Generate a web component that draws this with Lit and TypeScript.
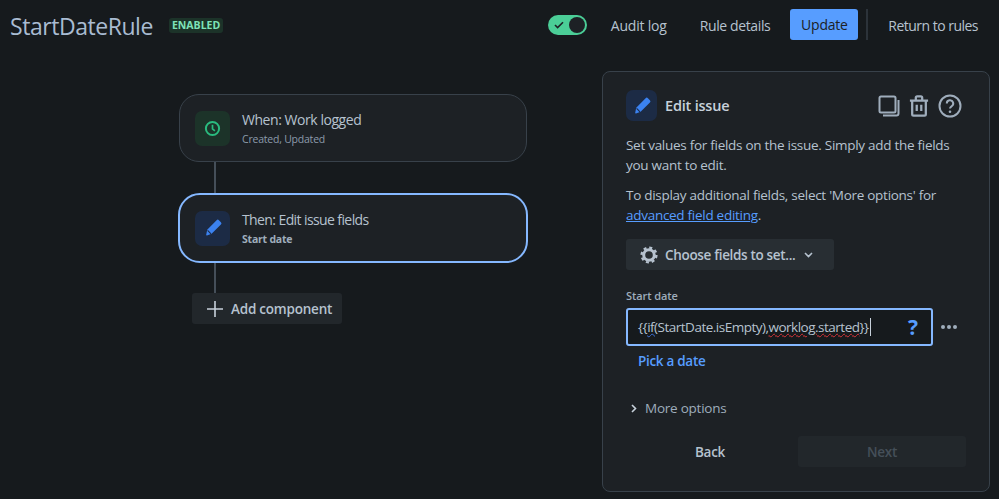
import { LitElement, html, css, svg } from "lit";
import { customElement } from "lit/decorators.js";

const pencil = svg`<path d="M13.6 2.2a1.6 1.6 0 0 1 2.3 0l2 2a1.6 1.6 0 0 1 0 2.3L8.6 15.8 4 17.4a.6.6 0 0 1-.8-.7l1-4.9z" fill="#3b82f0"/><path d="M4.6 12.4l3.4 3.4" stroke="#1c2b45" stroke-width="1.1"/>`;

@customElement("app-root")
export class AppRoot extends LitElement {
  static styles = css`
    :host {
      display: block;
      width: 999px;
      height: 499px;
      overflow: hidden;
      background: #161a1d;
      color: #b6c2cf;
      font-family: "Open Sans", "Noto Sans", sans-serif;
      font-size: 14px;
    }
    .header {
      display: flex;
      align-items: center;
      height: 49px;
      padding: 0 21px 0 10px;
    }
    .title {
      font-size: 23px;
      font-weight: 500;
      letter-spacing: -0.45px;
      color: #a9bcd2;
      margin-top: 2px;
    }
    .lozenge {
      margin-left: 16px;
      margin-top: 1px;
      padding: 0 3px;
      height: 15px;
      line-height: 15px;
      border-radius: 3px;
      background: #1c3329;
      color: #7ee2b8;
      font-size: 10.5px;
      font-weight: 700;
      letter-spacing: 0;
    }
    .spacer { flex: 1; }
    .toggle {
      position: relative;
      display: flex;
      align-items: center;
      justify-content: space-between;
      width: 39px;
      height: 20px;
      box-sizing: border-box;
      padding: 0 2px 0 6px;
      margin-top: 1px;
      border-radius: 10px;
      background: #4bce97;
      margin-right: 24px;
    }
    .knob {
      width: 16px;
      height: 16px;
      border-radius: 50%;
      background: #1d2125;
    }
    .hlink {
      font-size: 14px;
      font-weight: 500;
      color: #b6c2cf;
      letter-spacing: -0.3px;
      margin-top: 1px;
    }
    .audit { margin-right: 33px; letter-spacing: -0.2px; }
    .details { margin-right: 20px; letter-spacing: -0.38px; }
    .return { letter-spacing: -0.52px; }
    .update {
      width: 68px;
      height: 31px;
      display: flex;
      align-items: center;
      justify-content: center;
      border-radius: 3px;
      background: #579dff;
      color: #1d2125;
      font-weight: 500;
      letter-spacing: -0.25px;
    }
    .divider {
      width: 2px;
      height: 31px;
      background: #2c333a;
      margin: 0 20px 0 8px;
    }
    .main {
      display: flex;
      padding-top: 22px;
    }
    .flow {
      width: 424px;
      padding-left: 178px;
      padding-top: 23px;
      box-sizing: content-box;
    }
    .card {
      box-sizing: border-box;
      display: flex;
      align-items: center;
      gap: 12px;
      width: 348px;
      height: 68px;
      margin-left: 1px;
      padding-left: 15px;
      border: 1px solid #38414a;
      border-radius: 20px;
      background: #1d2125;
    }
    .card.sel {
      width: 350px;
      height: 70px;
      margin-left: 0;
      padding-left: 15px;
      border: 2px solid #85b8ff;
      border-radius: 22px;
    }
    .ico {
      flex: none;
      width: 35px;
      height: 35px;
      border-radius: 7px;
      display: flex;
      align-items: center;
      justify-content: center;
    }
    .ico.green { background: #1c3329; }
    .ico.blue { background: #1c2b45; }
    .ctext { padding-top: 1px; }
    .ctitle {
      font-size: 14px;
      line-height: 19px;
      color: #b6c2cf;
      letter-spacing: -0.45px;
    }
    .ctitle.tight { letter-spacing: -0.6px; }
    .csub {
      margin-top: 3px;
      font-size: 10.5px;
      line-height: 15px;
      color: #8c9bab;
      letter-spacing: -0.22px;
    }
    .csub.b { font-weight: 700; color: #9fadbc; }
    .line {
      width: 2px;
      margin-left: 36px;
      background: #454f59;
    }
    .l1 { height: 31px; }
    .l2 { height: 30px; }
    .add {
      display: inline-flex;
      align-items: center;
      gap: 7px;
      margin-left: 14px;
      width: 150px;
      height: 31px;
      box-sizing: border-box;
      padding-left: 14px;
      border-radius: 3px;
      background: #22272b;
      color: #b6c2cf;
      font-weight: 600;
      font-size: 13.5px;
      letter-spacing: -0.22px;
    }
    .panel {
      box-sizing: border-box;
      width: 388px;
      height: 421px;
      padding: 18px 23px 0;
      border: 1px solid #38414a;
      border-radius: 8px;
      background: #1d2125;
      position: relative;
    }
    .phead {
      display: flex;
      align-items: center;
      height: 31px;
    }
    .ico.small { width: 31px; height: 31px; }
    .ptitle {
      margin-left: 8px;
      font-size: 14.5px;
      font-weight: 600;
      color: #c7d1db;
      letter-spacing: -0.2px;
    }
    .actions {
      margin-left: auto;
      margin-right: 4px;
      display: flex;
      align-items: center;
      gap: 9px;
    }
    p {
      margin: 0;
      font-size: 13.5px;
      line-height: 19.5px;
      letter-spacing: -0.28px;
      color: #b6c2cf;
    }
    .p1 { margin-top: 15px; }
    .p2 { margin-top: 11px; }
    a { color: #579dff; text-decoration: underline; }
    .choose {
      display: flex;
      align-items: center;
      width: 208px;
      height: 31px;
      margin-top: 14px;
      box-sizing: border-box;
      padding-left: 14px;
      border-radius: 3px;
      background: #282e33;
      color: #b6c2cf;
      font-weight: 600;
      font-size: 13.5px;
      letter-spacing: -0.33px;
    }
    .choose .t { margin-left: 7px; margin-right: 9px; }
    .flabel {
      margin-top: 18px;
      font-size: 11px;
      line-height: 16px;
      font-weight: 600;
      color: #9fadbc;
      letter-spacing: -0.1px;
    }
    .frow {
      display: flex;
      align-items: center;
      margin-top: 4px;
    }
    .input {
      box-sizing: border-box;
      width: 307px;
      height: 38px;
      display: flex;
      align-items: center;
      padding-left: 10px;
      border: 2px solid #85b8ff;
      border-radius: 3px;
      background: #161a1d;
      font-size: 13.5px;
      letter-spacing: -0.5px;
      color: #b6c2cf;
    }
    .blueline { text-decoration: underline wavy #3b6fd8 1px; }
    .redline { text-decoration: underline wavy #d8343a 1px; }
    .caret {
      display: inline-block;
      width: 1px;
      height: 18px;
      background: #c7d1db;
      margin-left: 1px;
    }
    .q {
      margin-left: auto;
      margin-right: 13px;
      color: #579dff;
      font-weight: 700;
      font-size: 21px;
      letter-spacing: 0;
    }
    .dots {
      display: flex;
      gap: 2px;
      margin-left: 8px;
    }
    .dots i { width: 4px; height: 4px; border-radius: 50%; background: #9fadbc; display: block; }
    .pick {
      margin: 5px 0 0 12px;
      font-size: 13.5px;
      line-height: 20px;
      font-weight: 600;
      letter-spacing: -0.3px;
      color: #579dff;
    }
    .more {
      display: flex;
      align-items: center;
      margin: 27px 0 0 5px;
      height: 20px;
      font-size: 13.5px;
      letter-spacing: -0.24px;
      color: #9fadbc;
    }
    .more svg { margin-right: 8px; }
    .foot {
      display: flex;
      margin-top: 18px;
    }
    .back {
      width: 168px;
      height: 31px;
      display: flex;
      align-items: center;
      justify-content: center;
      font-weight: 600;
      font-size: 13.5px;
      letter-spacing: -0.25px;
      color: #b6c2cf;
    }
    .next {
      margin-left: 4px;
      width: 168px;
      height: 31px;
      display: flex;
      align-items: center;
      justify-content: center;
      border-radius: 3px;
      background: #22272b;
      font-weight: 600;
      font-size: 13.5px;
      letter-spacing: -0.25px;
      color: #454f59;
    }
  `;

  render() {
    return html`
      <div class="header">
        <div class="title">StartDateRule</div>
        <div class="lozenge">ENABLED</div>
        <div class="spacer"></div>
        <div class="toggle">
          <svg width="10" height="8" viewBox="0 0 10 8"><path d="M1 4l2.6 2.6L9 1.2" fill="none" stroke="#1d2125" stroke-width="1.6"/></svg>
          <div class="knob"></div>
        </div>
        <div class="hlink audit">Audit log</div>
        <div class="hlink details">Rule details</div>
        <div class="update">Update</div>
        <div class="divider"></div>
        <div class="hlink return">Return to rules</div>
      </div>
      <div class="main">
        <div class="flow">
          <div class="card">
            <div class="ico green">
              <svg width="17" height="17" viewBox="0 0 17 17" fill="none" stroke="#2abb7f" stroke-width="2"><circle cx="8.5" cy="8.5" r="6.6"/><path d="M8.5 4.8v4l2.4 2" stroke-width="1.7"/></svg>
            </div>
            <div class="ctext">
              <div class="ctitle">When: Work logged</div>
              <div class="csub">Created, Updated</div>
            </div>
          </div>
          <div class="line l1"></div>
          <div class="card sel">
            <div class="ico blue">
              <svg width="20" height="20" viewBox="0 0 20 20">${pencil}</svg>
            </div>
            <div class="ctext">
              <div class="ctitle tight">Then: Edit issue fields</div>
              <div class="csub b">Start date</div>
            </div>
          </div>
          <div class="line l2"></div>
          <div class="add">
            <svg width="18" height="18" viewBox="0 0 18 18"><path d="M9 1v16M1 9h16" stroke="#c7d1db" stroke-width="1.6"/></svg>
            Add component
          </div>
        </div>
        <div class="panel">
          <div class="phead">
            <div class="ico blue small">
              <svg width="20" height="20" viewBox="0 0 20 20">${pencil}</svg>
            </div>
            <div class="ptitle">Edit issue</div>
            <div class="actions">
              <svg width="22" height="22" viewBox="0 0 22 22" fill="none" stroke="#9fadbc" stroke-width="2"><rect x="1.5" y="1.5" width="16" height="16" rx="1.5"/><path d="M20.5 5v13.5a2 2 0 0 1-2 2H5"/></svg>
              <svg width="20" height="24" viewBox="0 0 22 24" fill="none" stroke="#9fadbc" stroke-width="2.5"><path d="M1 6h20M7.5 6V3a1.5 1.5 0 0 1 1.5-1.5h4A1.5 1.500 0 0 1 14.500 3v3M3.500 6v15a1.500 1.500 0 0 0 1.500 1.500h12a1.500 1.500 0 0 0 1.500-1.500V6M8.500 10.500v7M13.500 10.500v7"/></svg>
              <svg width="24" height="24" viewBox="0 0 24 24" fill="none" stroke="#9fadbc" stroke-width="2"><circle cx="12" cy="12" r="10.500"/><path d="M8.800 9.500a3.200 3.200 0 1 1 4.700 2.800c-1 .6-1.500 1.100-1.500 2.300"/><circle cx="12" cy="17.700" r="1.300" fill="#9fadbc" stroke="none"/></svg>
            </div>
          </div>
          <p class="p1">Set values for fields on the issue. Simply add the fields you want to edit.</p>
          <p class="p2">To display additional fields, select 'More options' for <a>advanced field editing</a>.</p>
          <div class="choose">
            <svg width="18" height="18" viewBox="0 0 18 18" fill="none"><circle cx="9" cy="9" r="5.300" stroke="#b6c2cf" stroke-width="3"/><circle cx="9" cy="9" r="7.400" stroke="#b6c2cf" stroke-width="2.400" stroke-dasharray="3 2.810"/></svg>
            <span class="t">Choose fields to set...</span>
            <svg width="9" height="6" viewBox="0 0 9 6"><path d="M1 1l3.500 3.500L8 1" fill="none" stroke="#b6c2cf" stroke-width="1.600"/></svg>
          </div>
          <div class="flabel">Start date</div>
          <div class="frow">
            <div class="input">
              <span>{{<span class="blueline">if(</span>StartDate.isEmpty),<span class="redline">worklog.started</span>}}</span><span class="caret"></span>
              <span class="q">?</span>
            </div>
            <div class="dots"><i></i><i></i><i></i></div>
          </div>
          <div class="pick">Pick a date</div>
          <div class="more">
            <svg width="6" height="9" viewBox="0 0 6 9"><path d="M1 1l3.500 3.500L1 8" fill="none" stroke="#c7d1db" stroke-width="1.600"/></svg>
            More options
          </div>
          <div class="foot">
            <div class="back">Back</div>
            <div class="next">Next</div>
          </div>
        </div>
      </div>
    `;
  }
}
